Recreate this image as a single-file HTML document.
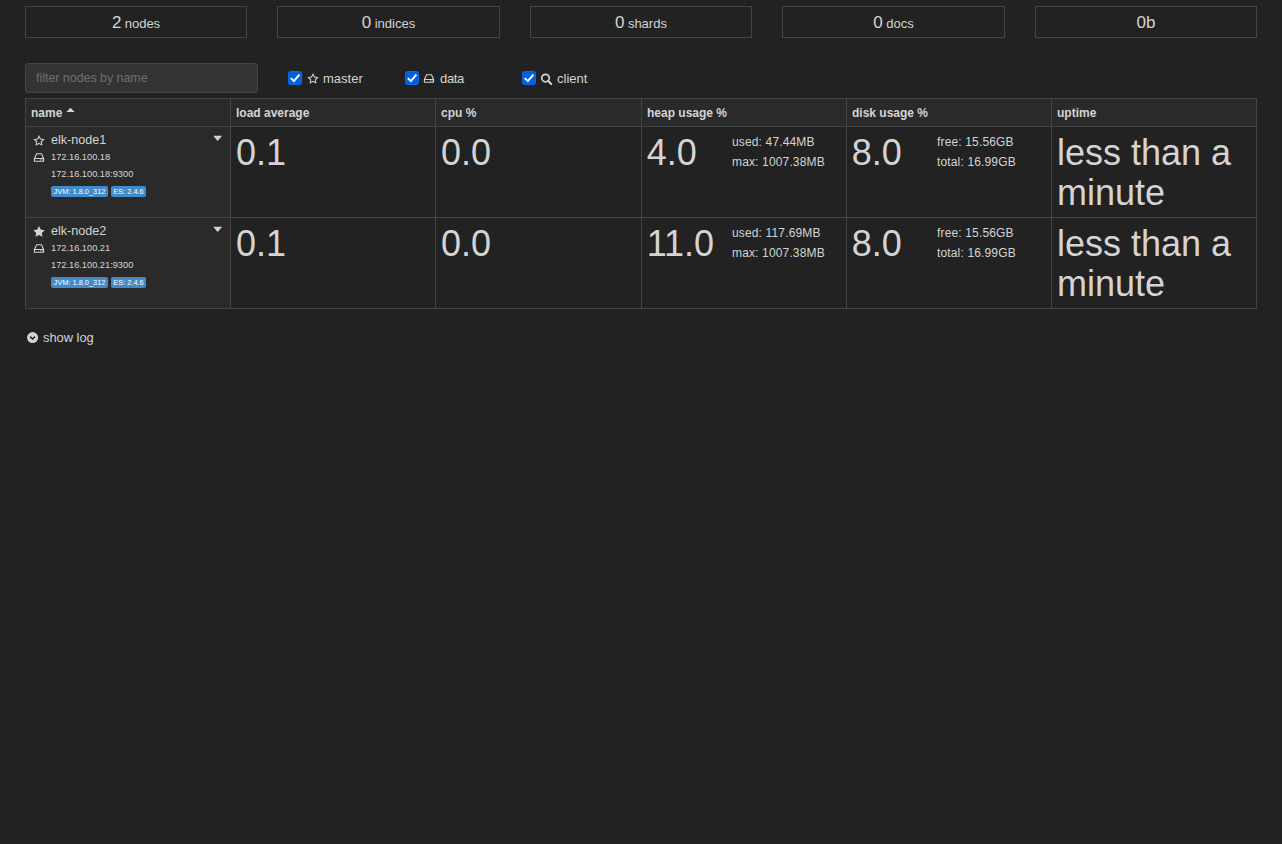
<!DOCTYPE html>
<html><head><meta charset="utf-8">
<style>
*{box-sizing:border-box;}
html,body{margin:0;padding:0;}
body{background:#222;color:#d4d4d4;font-family:"Liberation Sans",sans-serif;font-size:12px;width:1282px;height:844px;position:relative;overflow:hidden;}
.a{position:absolute;white-space:nowrap;}
.stat{position:absolute;top:6px;height:32px;border:1px solid #444;text-align:center;line-height:32px;}
.stat .v{font-size:17px;}
.stat .l{font-size:13px;}
.filter{position:absolute;left:25px;top:63px;width:233px;height:30px;background:#333;border:1px solid #444;border-radius:3px;color:#6f6f6f;font-size:12.4px;line-height:28px;padding-left:10px;}
.cbt{font-size:13px;line-height:16px;top:71px;}
.cell{position:absolute;border:1px solid #444;}
.hd{background:#2a2a2a;font-weight:bold;font-size:12px;line-height:14px;padding:7px 0 0 5px;}
.nm{background:#2a2a2a;}
.big{font-size:36px;line-height:39.6px;}
.up{white-space:normal;width:200px;}
.sub{font-size:12px;line-height:20px;letter-spacing:0.15px;}
.nmt{font-size:12.6px;line-height:15px;}
.ip{font-size:9.25px;line-height:12px;}
.lbl{position:absolute;height:11px;background:#428bca;border-radius:2px;color:#fff;font-size:7.4px;line-height:11px;text-align:center;white-space:nowrap;}
</style></head><body>
<div class="stat" style="left:25px;width:222px"><span class="v">2</span> <span class="l">nodes</span></div>
<div class="stat" style="left:277px;width:223px"><span class="v">0</span> <span class="l">indices</span></div>
<div class="stat" style="left:530px;width:222px"><span class="v">0</span> <span class="l">shards</span></div>
<div class="stat" style="left:782px;width:223px"><span class="v">0</span> <span class="l">docs</span></div>
<div class="stat" style="left:1035px;width:222px"><span class="v">0b</span></div>

<div class="filter">filter nodes by name</div>

<!-- checkboxes -->
<svg class="a" style="left:288px;top:71px" width="14" height="14" viewBox="0 0 14 14"><rect x="0.5" y="0.5" width="13" height="13" rx="2" fill="#0061dd" stroke="#086ae8"/><path d="M2.8 7.1 L5.9 10.1 L11.4 3.7" fill="none" stroke="#fff" stroke-width="2"/></svg>
<svg class="a" style="left:306px;top:72px" width="14" height="14" viewBox="0 0 14 14"><path d="M7.00 1.00 L8.73 4.58 L12.68 5.13 L9.81 7.88 L10.51 11.80 L7.00 9.92 L3.49 11.80 L4.19 7.88 L1.32 5.13 L5.27 4.58 Z M5.94 5.51 L3.53 5.84 L5.29 7.53 L4.85 9.92 L7.00 8.77 L9.15 9.92 L8.71 7.53 L10.47 5.84 L8.06 5.51 L7.00 3.32 Z" fill="#d4d4d4" fill-rule="evenodd"/></svg>
<span class="a cbt" style="left:323px">master</span>

<svg class="a" style="left:405px;top:71px" width="14" height="14" viewBox="0 0 14 14"><rect x="0.5" y="0.5" width="13" height="13" rx="2" fill="#0061dd" stroke="#086ae8"/><path d="M2.8 7.1 L5.9 10.1 L11.4 3.7" fill="none" stroke="#fff" stroke-width="2"/></svg>
<svg class="a" style="left:420px;top:70px" width="18" height="18" viewBox="0 0 18 18"><path d="M6.6 4.8 H11.5 L13.6 9.5 V12.3 H4.4 V9.5 Z M4.4 9.5 H13.6" fill="none" stroke="#d4d4d4" stroke-width="1.1" stroke-linejoin="round"/><rect x="10.2" y="10.4" width="0.9" height="1" fill="#d4d4d4"/><rect x="11.8" y="10.4" width="0.9" height="1" fill="#d4d4d4"/></svg>
<span class="a cbt" style="left:440px;letter-spacing:-0.35px">data</span>

<svg class="a" style="left:522px;top:71px" width="14" height="14" viewBox="0 0 14 14"><rect x="0.5" y="0.5" width="13" height="13" rx="2" fill="#0061dd" stroke="#086ae8"/><path d="M2.8 7.1 L5.9 10.1 L11.4 3.7" fill="none" stroke="#fff" stroke-width="2"/></svg>
<svg class="a" style="left:537px;top:70px" width="18" height="18" viewBox="0 0 18 18"><circle cx="8.5" cy="8.1" r="3.75" fill="none" stroke="#d4d4d4" stroke-width="1.7"/><path d="M11.5 11.2 L14.2 13.9" stroke="#d4d4d4" stroke-width="2.1" stroke-linecap="round"/></svg>
<span class="a cbt" style="left:557px">client</span>

<!-- table grid -->
<div class="cell hd" style="left:25px;top:98px;width:206px;height:29px">name <svg width="9" height="6" viewBox="0 0 9 6" style="vertical-align:4px"><path d="M0.3 5 L4.5 0.8 L8.7 5 Z" fill="#d4d4d4"/></svg></div>
<div class="cell hd" style="left:230px;top:98px;width:206px;height:29px">load average</div>
<div class="cell hd" style="left:435px;top:98px;width:207px;height:29px">cpu %</div>
<div class="cell hd" style="left:641px;top:98px;width:206px;height:29px">heap usage %</div>
<div class="cell hd" style="left:846px;top:98px;width:206px;height:29px">disk usage %</div>
<div class="cell hd" style="left:1051px;top:98px;width:206px;height:29px">uptime</div>

<div class="cell nm" style="left:25px;top:126px;width:206px;height:92px"></div>
<div class="cell" style="left:230px;top:126px;width:206px;height:92px"></div>
<div class="cell" style="left:435px;top:126px;width:207px;height:92px"></div>
<div class="cell" style="left:641px;top:126px;width:206px;height:92px"></div>
<div class="cell" style="left:846px;top:126px;width:206px;height:92px"></div>
<div class="cell" style="left:1051px;top:126px;width:206px;height:92px"></div>

<div class="cell nm" style="left:25px;top:217px;width:206px;height:92px"></div>
<div class="cell" style="left:230px;top:217px;width:206px;height:92px"></div>
<div class="cell" style="left:435px;top:217px;width:207px;height:92px"></div>
<div class="cell" style="left:641px;top:217px;width:206px;height:92px"></div>
<div class="cell" style="left:846px;top:217px;width:206px;height:92px"></div>
<div class="cell" style="left:1051px;top:217px;width:206px;height:92px"></div>

<!-- row 1 content -->
<svg class="a" style="left:32px;top:134px" width="14" height="14" viewBox="0 0 14 14"><path d="M7.00 1.00 L8.73 4.58 L12.68 5.13 L9.81 7.88 L10.51 11.80 L7.00 9.92 L3.49 11.80 L4.19 7.88 L1.32 5.13 L5.27 4.58 Z M5.94 5.51 L3.53 5.84 L5.29 7.53 L4.85 9.92 L7.00 8.77 L9.15 9.92 L8.71 7.53 L10.47 5.84 L8.06 5.51 L7.00 3.32 Z" fill="#d4d4d4" fill-rule="evenodd"/></svg>
<span class="a nmt" style="left:51px;top:133px">elk-node1</span>
<svg class="a" style="left:210px;top:133px" width="14" height="10" viewBox="0 0 14 10"><path d="M3.2 2.8 H12.1 L7.65 8 Z" fill="#d4d4d4"/></svg>
<svg class="a" style="left:30px;top:149px" width="18" height="18" viewBox="0 0 18 18"><path d="M6.6 4.8 H11.5 L13.6 9.5 V12.3 H4.4 V9.5 Z M4.4 9.5 H13.6" fill="none" stroke="#d4d4d4" stroke-width="1.1" stroke-linejoin="round"/><rect x="10.2" y="10.4" width="0.9" height="1" fill="#d4d4d4"/><rect x="11.8" y="10.4" width="0.9" height="1" fill="#d4d4d4"/></svg>
<span class="a ip" style="left:51px;top:151px">172.16.100.18</span>
<span class="a ip" style="left:51px;top:168px">172.16.100.18:9300</span>
<span class="lbl" style="left:51px;top:186px;width:57px">JVM: 1.8.0_312</span>
<span class="lbl" style="left:111px;top:186px;width:35px">ES: 2.4.6</span>

<span class="a big" style="left:236px;top:133px">0.1</span>
<span class="a big" style="left:441px;top:133px">0.0</span>
<span class="a big" style="left:646.7px;top:133px">4.0</span>
<span class="a sub" style="left:732px;top:132px">used: 47.44MB</span>
<span class="a sub" style="left:732px;top:152px">max: 1007.38MB</span>
<span class="a big" style="left:851.7px;top:133px">8.0</span>
<span class="a sub" style="left:937px;top:132px">free: 15.56GB</span>
<span class="a sub" style="left:937px;top:152px">total: 16.99GB</span>
<span class="a big up" style="left:1057px;top:133.4px">less than a minute</span>

<!-- row 2 content -->
<svg class="a" style="left:32px;top:225px" width="14" height="14" viewBox="0 0 14 14"><path d="M7.00 1.00 L8.73 4.58 L12.68 5.13 L9.81 7.88 L10.51 11.80 L7.00 9.92 L3.49 11.80 L4.19 7.88 L1.32 5.13 L5.27 4.58 Z" fill="#d4d4d4"/></svg>
<span class="a nmt" style="left:51px;top:224px">elk-node2</span>
<svg class="a" style="left:210px;top:224px" width="14" height="10" viewBox="0 0 14 10"><path d="M3.2 2.8 H12.1 L7.65 8 Z" fill="#d4d4d4"/></svg>
<svg class="a" style="left:30px;top:240px" width="18" height="18" viewBox="0 0 18 18"><path d="M6.6 4.8 H11.5 L13.6 9.5 V12.3 H4.4 V9.5 Z M4.4 9.5 H13.6" fill="none" stroke="#d4d4d4" stroke-width="1.1" stroke-linejoin="round"/><rect x="10.2" y="10.4" width="0.9" height="1" fill="#d4d4d4"/><rect x="11.8" y="10.4" width="0.9" height="1" fill="#d4d4d4"/></svg>
<span class="a ip" style="left:51px;top:242px">172.16.100.21</span>
<span class="a ip" style="left:51px;top:259px">172.16.100.21:9300</span>
<span class="lbl" style="left:51px;top:277px;width:57px">JVM: 1.8.0_312</span>
<span class="lbl" style="left:111px;top:277px;width:35px">ES: 2.4.6</span>

<span class="a big" style="left:236px;top:224px">0.1</span>
<span class="a big" style="left:441px;top:224px">0.0</span>
<span class="a big" style="left:646.7px;top:224px">11.0</span>
<span class="a sub" style="left:732px;top:223px">used: 117.69MB</span>
<span class="a sub" style="left:732px;top:243px">max: 1007.38MB</span>
<span class="a big" style="left:851.7px;top:224px">8.0</span>
<span class="a sub" style="left:937px;top:223px">free: 15.56GB</span>
<span class="a sub" style="left:937px;top:243px">total: 16.99GB</span>
<span class="a big up" style="left:1057px;top:224.4px">less than a minute</span>

<!-- show log -->
<svg class="a" style="left:26px;top:331px" width="14" height="14" viewBox="0 0 14 14"><circle cx="6.6" cy="6.6" r="5.5" fill="#d4d4d4"/><path d="M4.2 5.6 L6.6 8 L9 5.6" fill="none" stroke="#222" stroke-width="1.5"/></svg>
<span class="a" style="left:43px;top:329.6px;font-size:12.85px;line-height:15px">show log</span>
</body></html>
